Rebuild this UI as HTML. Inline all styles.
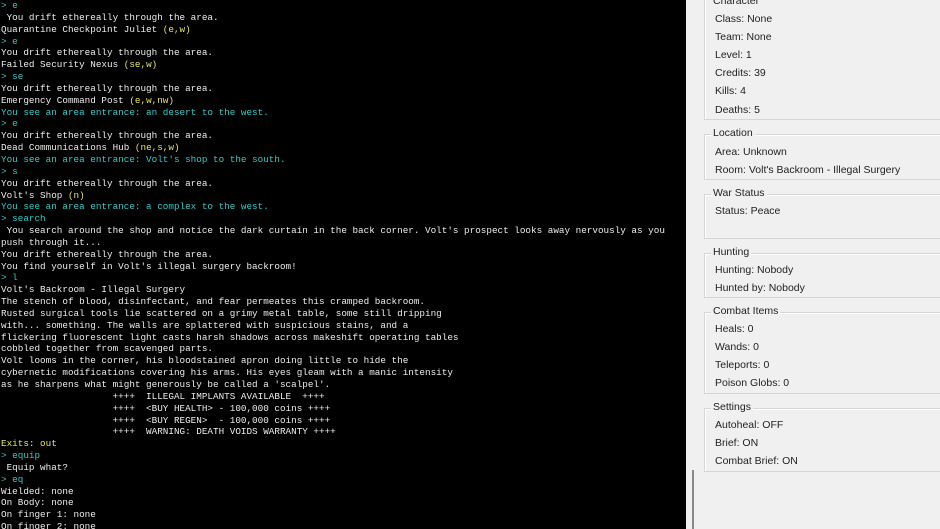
<!DOCTYPE html>
<html><head><meta charset="utf-8"><style>
html,body{margin:0;padding:0;width:940px;height:529px;overflow:hidden;background:#f0f0f0}
#term{position:absolute;left:0;top:0;width:686px;height:529px;background:#000;overflow:hidden}
#term pre{margin:0;position:absolute;left:1px;top:0;font-family:"Liberation Mono",monospace;font-size:9.3px;line-height:11.85px;color:#ececec;white-space:pre}
.c{color:#35c8c8}.y{color:#e6e06a}
.g{position:absolute;left:704px;width:250px;border:1px solid #d6d6d6;box-shadow:inset 1px 1px 0 #fff}
.g .t{position:absolute;left:6px;top:-8px;background:#f0f0f0;padding:0 2px;font-family:"Liberation Sans",sans-serif;font-size:10.5px;color:#222}
.it{position:absolute;left:715px;font-family:"Liberation Sans",sans-serif;font-size:10.5px;color:#222;line-height:12px}
#vl{position:absolute;left:692px;top:470px;width:2px;height:59px;background:#8a8a8a}
</style></head><body>
<div id="term"><pre><span class="c">&gt; e</span>
 You drift ethereally through the area.
Quarantine Checkpoint Juliet <span class="y">(e,w)</span>
<span class="c">&gt; e</span>
You drift ethereally through the area.
Failed Security Nexus <span class="y">(se,w)</span>
<span class="c">&gt; se</span>
You drift ethereally through the area.
Emergency Command Post <span class="y">(e,w,nw)</span>
<span class="c">You see an area entrance: an desert to the west.</span>
<span class="c">&gt; e</span>
You drift ethereally through the area.
Dead Communications Hub <span class="y">(ne,s,w)</span>
<span class="c">You see an area entrance: Volt's shop to the south.</span>
<span class="c">&gt; s</span>
You drift ethereally through the area.
Volt's Shop <span class="y">(n)</span>
<span class="c">You see an area entrance: a complex to the west.</span>
<span class="c">&gt; search</span>
 You search around the shop and notice the dark curtain in the back corner. Volt's prospect looks away nervously as you
push through it...
You drift ethereally through the area.
You find yourself in Volt's illegal surgery backroom!
<span class="c">&gt; l</span>
Volt's Backroom - Illegal Surgery
The stench of blood, disinfectant, and fear permeates this cramped backroom.
Rusted surgical tools lie scattered on a grimy metal table, some still dripping
with... something. The walls are splattered with suspicious stains, and a
flickering fluorescent light casts harsh shadows across makeshift operating tables
cobbled together from scavenged parts.
Volt looms in the corner, his bloodstained apron doing little to hide the
cybernetic modifications covering his arms. His eyes gleam with a manic intensity
as he sharpens what might generously be called a 'scalpel'.
                    ++++  ILLEGAL IMPLANTS AVAILABLE  ++++
                    ++++  &lt;BUY HEALTH&gt; - 100,000 coins ++++
                    ++++  &lt;BUY REGEN&gt;  - 100,000 coins ++++
                    ++++  WARNING: DEATH VOIDS WARRANTY ++++
<span class="y">Exits: out</span>
<span class="c">&gt; equip</span>
 Equip what?
<span class="c">&gt; eq</span>
Wielded: none
On Body: none
On finger 1: none
On finger 2: none</pre></div>
<div class="g" style="top:-2px;height:120px"><div class="t" style="top:-4px">Character</div></div>
<div class="it" style="top:13px">Class: None</div>
<div class="it" style="top:31px">Team: None</div>
<div class="it" style="top:49px">Level: 1</div>
<div class="it" style="top:67px">Credits: 39</div>
<div class="it" style="top:85px">Kills: 4</div>
<div class="it" style="top:104px">Deaths: 5</div>
<div class="g" style="top:134px;height:44px"><div class="t">Location</div></div>
<div class="it" style="top:146px">Area: Unknown</div>
<div class="it" style="top:164px">Room: Volt's Backroom - Illegal Surgery</div>
<div class="g" style="top:194px;height:43px"><div class="t">War Status</div></div>
<div class="it" style="top:205px">Status: Peace</div>
<div class="g" style="top:253px;height:43px"><div class="t">Hunting</div></div>
<div class="it" style="top:264px">Hunting: Nobody</div>
<div class="it" style="top:282px">Hunted by: Nobody</div>
<div class="g" style="top:312px;height:80px"><div class="t">Combat Items</div></div>
<div class="it" style="top:323px">Heals: 0</div>
<div class="it" style="top:341px">Wands: 0</div>
<div class="it" style="top:359px">Teleports: 0</div>
<div class="it" style="top:377px">Poison Globs: 0</div>
<div class="g" style="top:408px;height:62px"><div class="t">Settings</div></div>
<div class="it" style="top:419px">Autoheal: OFF</div>
<div class="it" style="top:437px">Brief: ON</div>
<div class="it" style="top:455px">Combat Brief: ON</div>
<div id="vl"></div>
</body></html>
